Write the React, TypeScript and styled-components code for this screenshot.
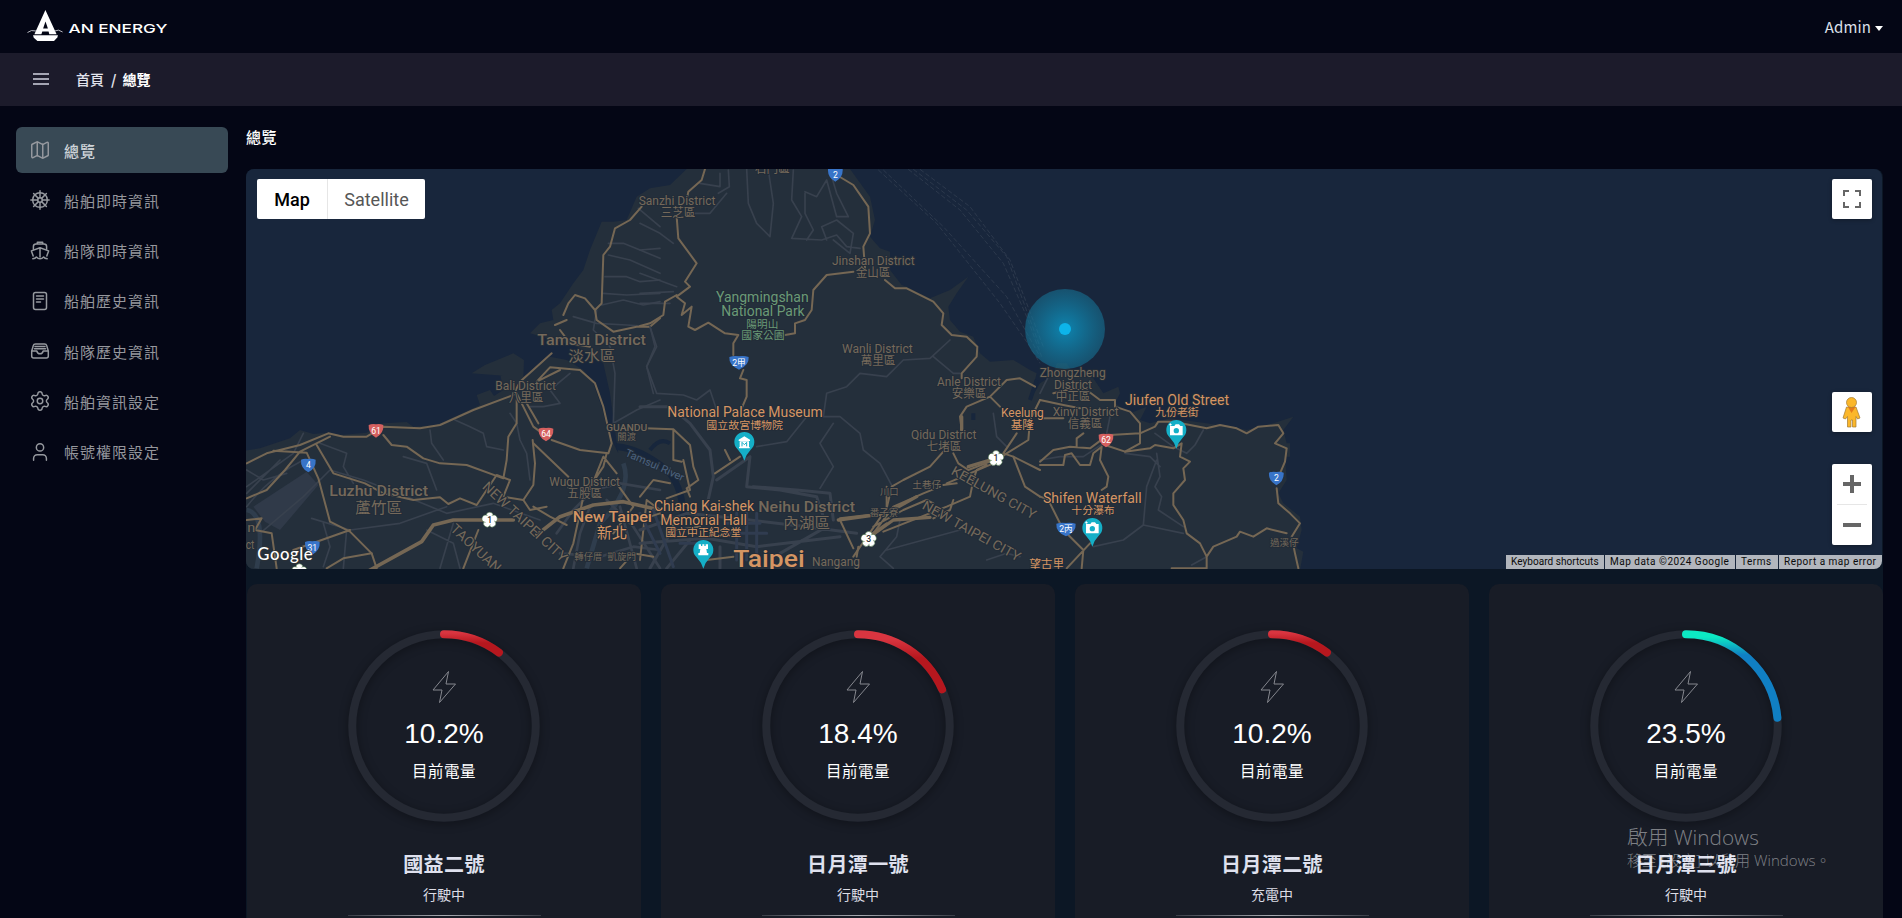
import React from "react";
import styled, { createGlobalStyle } from "styled-components";
import { Map as MapIcon, ShipWheel, Settings, User } from "lucide-react";

const GlobalStyle = createGlobalStyle`
  * { box-sizing: border-box; }
  html, body { margin: 0; height: 100%; overflow: hidden; background: #040615; }
  body { font-family: "Noto Sans CJK TC", "Noto Sans", sans-serif; color: #fff; }
`;

const Page = styled.div`
  position: relative;
  height: 918px;
  overflow: hidden;
  display: flex;
  flex-direction: column;
  background: #040615;
`;

const TopBar = styled.header`
  flex: none;
  height: 53px;
  display: flex;
  justify-content: space-between;
  align-items: center;
  padding: 0 19px 0 27px;
  background: #040615;
`;

const AdminMenu = styled.div`
  display: flex;
  align-items: center;
  gap: 4px;
  font-size: 15px;
  letter-spacing: 0.15px;
  color: #dde0ea;
`;

const Caret = styled.span`
  margin-top: 3px;
  border: 4.5px solid transparent;
  border-top: 5px solid #fff;
  border-bottom: 0;
`;

const CrumbBar = styled.nav`
  flex: none;
  height: 53px;
  display: flex;
  align-items: center;
  padding: 0 0 2px 33px;
  background: #1c1b2b;
  font-size: 14px;
  font-weight: 500;
  color: #e2e3ec;
`;

const Burger = styled.div`
  width: 16px;
  height: 12px;
  margin-right: 27px;
  border-top: 2px solid #a4a5b3;
  border-bottom: 2px solid #a4a5b3;
  display: flex;
  align-items: center;
  &::after { content: ""; width: 100%; height: 2px; background: #a4a5b3; }
`;

const Slash = styled.span`margin: 0 6px 0 7px; font-weight: 700;`;
const Current = styled.span`font-weight: 700; color: #fff;`;

const Body = styled.div`
  flex: 1;
  min-height: 0;
  display: flex;
`;

const Sidebar = styled.aside`
  flex: none;
  width: 246px;
  padding: 21px 18px 0 16px;
  display: flex;
  flex-direction: column;
  gap: 4.3px;
`;

const NavItem = styled.a<{ $active?: boolean }>`
  height: 46px;
  padding: 0 0 0 13px;
  display: flex;
  align-items: center;
  gap: 13px;
  border-radius: 6px;
  font-size: 15px;
  letter-spacing: 1px;
  font-weight: ${p => (p.$active ? 500 : 400)};
  color: ${p => (p.$active ? "#cdd3d8" : "#96979d")};
  background: ${p => (p.$active ? "#384955" : "transparent")};
  svg { flex: none; color: #96999f; }
`;

const Main = styled.main`
  width: 1637px;
  display: flex;
  flex-direction: column;
`;

const Title = styled.h1`
  flex: none;
  margin: 0;
  height: 63px;
  padding-top: 19px;
  font-size: 15px;
  line-height: 24px;
  font-weight: 500;
  letter-spacing: 0.5px;
`;

const Board = styled.div`
  flex: none;
  height: 749px;
  background: #0c1725;
  border-radius: 8px 8px 0 0;
`;

const MapFrame = styled.section`
  position: relative;
  height: 400px;
  margin-right: 1px;
  border-radius: 8px;
  overflow: hidden;
  background: #18263c;
  font-family: Roboto, "Noto Sans CJK TC", sans-serif;
  & > svg { display: block; }
`;

const TypeSwitch = styled.div`
  position: absolute;
  left: 11px;
  top: 10px;
  height: 40px;
  display: flex;
  border-radius: 2px;
  background: #fff;
`;

const TypeButton = styled.div<{ $on?: boolean }>`
  width: ${p => (p.$on ? 70 : 98)}px;
  display: flex;
  align-items: center;
  justify-content: center;
  font-size: 18px;
  font-weight: ${p => (p.$on ? 500 : 400)};
  color: ${p => (p.$on ? "#000" : "#565656")};
  border-left: ${p => (p.$on ? 0 : 1)}px solid #e6e6e6;
`;

const MapButton = styled.div<{ $top: number; $tall?: boolean }>`
  position: absolute;
  right: 10px;
  top: ${p => p.$top}px;
  width: 40px;
  height: ${p => (p.$tall ? 81 : 40)}px;
  border-radius: 2px;
  background: #fff;
  box-shadow: 0 1px 4px rgba(0, 0, 0, 0.3);
  svg { display: block; }
`;

const Credits = styled.div`
  position: absolute;
  right: 0;
  bottom: 0;
  height: 14px;
  display: flex;
  gap: 1px;
`;

const Credit = styled.span<{ $w: number; $ls: number }>`
  width: ${p => p.$w}px;
  padding-left: 5px;
  white-space: nowrap;
  font-size: 10px;
  line-height: 14px;
  letter-spacing: ${p => p.$ls}px;
  color: #0a0a0a;
  background: #b2b6bd;
`;

const Cards = styled.section`
  margin: 15px 0 0 1px;
  display: grid;
  grid-template-columns: repeat(4, 394px);
  justify-content: space-between;
`;

const Card = styled.article`
  height: 420px;
  padding-top: 46px;
  display: flex;
  flex-direction: column;
  align-items: center;
  border-radius: 10px;
  background: #181c26;
`;

const Gauge = styled.div`
  width: 192px;
  height: 192px;
  display: grid;
  & > * { grid-area: 1 / 1; }
  & > svg { overflow: visible; filter: drop-shadow(0 2px 5px rgba(0, 0, 0, 0.35)); }
`;

const GaugeText = styled.div`
  z-index: 1;
  padding-top: 40px;
  display: flex;
  flex-direction: column;
  align-items: center;
`;

const Percent = styled.div`
  margin-top: 14px;
  font: 28px/32px "Liberation Sans", Arial, sans-serif;
`;

const Caption = styled.div`
  margin-top: 8px;
  font-size: 15.5px;
  line-height: 24px;
  letter-spacing: 0.5px;
`;

const ShipName = styled.h2`
  margin: 27px 0 0;
  font-size: 20px;
  line-height: 30px;
  font-weight: 700;
  letter-spacing: 0.4px;
  color: #dfe1ee;
`;

const ShipState = styled.div`
  margin-top: 5px;
  font-size: 14px;
  line-height: 20px;
  color: #dcdde5;
`;

const Divider = styled.div`
  margin-top: 11px;
  width: 193px;
  height: 1px;
  background: linear-gradient(90deg, #3a3e47, #a8aab0 50%, #3a3e47);
`;

const Watermark = styled.div`
  position: absolute;
  left: 1627px;
  top: 823px;
  font-family: "Open Sans", "Noto Sans CJK TC", sans-serif;
  font-weight: 300;
  color: rgba(255, 255, 255, 0.45);
  white-space: nowrap;
`;
const WaterTitle = styled.div`font-size: 20.8px; line-height: 28px;`;
const WaterText = styled.div`font-size: 15.1px; line-height: 18px;`;

const Logo = () => (
  <svg width="145" height="40" viewBox="27 7 145 40">
    <path d="M45.4 10 56.6 34.3H49.3L48.6 31.4H42.3L41.4 34.3H34.4ZM45.5 21.5 43.1 28.4H47.9Z" fill="#fff" fillRule="evenodd" />
    <path d="M33 35.3H58L57.3 37.5 54 41H37.4L33.8 37.8Z" fill="#fff" />
    <path d="M27.5 32.5Q31 29.4 36.2 31M62.6 32Q58.5 28.8 54.6 31" fill="none" stroke="#c8c9d0" strokeWidth="0.9" />
    <text x="68.5" y="33" textLength="99" lengthAdjust="spacingAndGlyphs" fontFamily="Inter, sans-serif" fontSize="12" fontWeight="500" fill="#fff">AN ENERGY</text>
  </svg>
);

const line = { fill: "none", stroke: "currentColor", strokeWidth: 1.5, strokeLinecap: "round" as const, strokeLinejoin: "round" as const };

const FleetIcon = () => (
  <svg width="22" height="22" viewBox="0 0 22 22" {...line}>
    <path d="M8.3 3.8V2.3h5.4v1.5M4.4 9.300V6.400Q4.400 4 7 4h8Q17.600 4 17.600 6.400V9.300" />
    <path d="M4.200 16 2.400 10.900 11 7.800 19.600 10.900 17.800 16M11 8v9" />
    <path d="M3.800 18.800Q6.200 18.600 7.400 17 9 18.800 11 18.800T14.600 17Q15.800 18.600 18.200 18.800" />
  </svg>
);
const RecordIcon = () => (
  <svg width="22" height="22" viewBox="0 0 22 22" {...line}>
    <rect x="4.500" y="2.500" width="13" height="17" rx="2" /><path d="M7.500 6h7M7.500 9h7M7.500 12h4" />
  </svg>
);
const ArchiveIcon = () => (
  <svg width="22" height="22" viewBox="0 0 22 22" {...line}>
    <path d="M2.700 11 4.300 5.600Q4.700 4 6.500 4h9q1.800 0 2.200 1.600L19.300 11v5q0 2-2 2H4.700q-2 0-2-2ZM2.700 11H7.800Q8.500 13.800 11 13.800T14.200 11h5.100M6 6.500h10M5.500 8.800h11" />
  </svg>
);

const lucide = { size: 22, strokeWidth: 1.6 };
const nav = [
  { text: "總覽", icon: <MapIcon {...lucide} />, active: true },
  { text: "船舶即時資訊", icon: <ShipWheel {...lucide} /> },
  { text: "船隊即時資訊", icon: <FleetIcon /> },
  { text: "船舶歷史資訊", icon: <RecordIcon /> },
  { text: "船隊歷史資訊", icon: <ArchiveIcon /> },
  { text: "船舶資訊設定", icon: <Settings {...lucide} /> },
  { text: "帳號權限設定", icon: <User {...lucide} /> },
];

type LabelProps = { x: number; y: number; w: number; s?: number; c?: string; children: string; r?: number; b?: boolean };
const DIM = "#75695a";
const TAN = "#d59563";

const Label = ({ x, y, w, s = 36, c = DIM, children, r = 0, b }: LabelProps) => (
  <text x={x} y={y} textAnchor="middle" fontSize={s} fill={c} textLength={w} lengthAdjust="spacingAndGlyphs"
    fontWeight={b ? 500 : 400} stroke="#222c38" strokeWidth={6} paintOrder="stroke" strokeLinejoin="round"
    transform={r ? `rotate(${r} ${x} ${y})` : undefined}>{children}</text>
);

const Shield = ({ x, y, t, red, w = 22 }: { x: number; y: number; t: string; red?: boolean; w?: number }) => (
  <g transform={`translate(${x} ${y})`}>
    <path d={`M${-w} -17Q${-w / 2} -22 0 -19Q${w / 2} -22 ${w} -17Q${w + 2} 8 0 21Q${-w - 2} 8 ${-w} -17Z`} fill={red ? "#d5605f" : "#3874c8"} />
    <text y={9} textAnchor="middle" fontSize={26} fill="#fff">{t}</text>
  </g>
);

const Flower = ({ x, y, t }: { x: number; y: number; t: string }) => (
  <g transform={`translate(${x} ${y})`}>
    <g fill="#fff" stroke="#4f7a4a" strokeWidth={1.5}>
      {[0, 72, 144, 216, 288].map(a => <circle key={a} cx={0} cy={-13} r={10.5} transform={`rotate(${a})`} />)}
    </g>
    <circle r={14} fill="#fff" />
    <text y={9} textAnchor="middle" fontSize={26} fontWeight={500} fill="#333">{t}</text>
  </g>
);

const Pin = ({ x, y, kind }: { x: number; y: number; kind: "camera" | "museum" | "tower" }) => (
  <g transform={`translate(${x} ${y})`}>
    <path d="M0 55Q-6 35-19 22A30 30 0 1 1 19 22Q6 35 0 55Z" fill="#15afc7" />
    {kind === "camera" && <><path d="M-19-13h13l4-5H8l4 5h7v28h-38Z" fill="#fff" /><circle cy={1} r={8} fill="#15afc7" /><path d="M-18-14v-7M-21-17h7" stroke="#fff" strokeWidth={3} /></>}
    {kind === "museum" && <><path d="M-17-8 0-18 17-8v4h-34ZM-16 14h32v4h-32ZM-14-3h28v17h-28Z" fill="#fff" /><path d="M-7 12V0L0 7 7 0V12" fill="none" stroke="#15afc7" strokeWidth={3} /></>}
    {kind === "tower" && <path d="M-14-18h7v5h4v-5h6v5h4v-5h7V-4H9L11 8h4v7h-30V8h4L-9-4h-5Z" fill="#fff" />}
  </g>
);

const WestRoads = () => (
  <>
    <g stroke="#38414e" strokeWidth={5}>
      <path d="M20 1040Q90 950 190 900M190 820 160 880 20 980M20 1000 120 900M240 850 320 880 310 920 340 970M20 930 70 960 140 940M60 1120 190 1010 270 930 370 960 500 1010 620 1060 760 1030 900 1080M215 1075 330 1110 480 1090 620 1040M250 1090 270 1160 250 1220M320 1110 310 1225M640 1090 600 1225M560 1110 640 1150 660 1225" />
      <path d="M1195 145 1260 200M1105 250 1150 250 1200 270 1260 265M1105 285 1170 300 1260 340M1095 350 1160 350 1200 365 1260 360M1090 400 1160 405 1260 400M1085 435 1150 420 1210 435 1260 425M1000 470 1070 490 1160 495 1230 500 1245 560 1220 620 1240 700M1070 450 1060 510 1110 560 1125 640 1120 790 1190 750 1260 720M645 780 690 800 730 820 740 860 790 870M570 810 575 850 610 900M490 890 560 910 590 990M870 740 910 740 960 730 930 690 990 640M810 760 830 790 840 840 860 880 870 960" />
      <path d="M950 1120 1000 1050 1060 990 1140 970 1260 990M960 1180 1080 1190 1180 1160 1260 1170M1000 1225 1020 1120 1050 1040M1100 1020 1180 1100 1260 1225M1140 1040 1190 1225" strokeWidth={8} />
    </g>
    <g stroke="#756754" strokeWidth={6}>
      <path d="M20 910 80 880 180 855 265 820 310 830 380 830 430 800 540 805 600 795 700 750 820 705 840 665 935 580M20 1015 80 990 135 930 180 875 270 830M100 872 200 878 235 955 270 1085 330 1115 395 1180 410 1225M230 855 280 940 375 970 430 1000 520 1020 600 1012 625 1032 660 1015 710 1035 770 945 810 960 790 1010 850 1020 880 975 885 910 878 840" />
      <path d="M430 825 455 855 500 860 550 895 600 910 680 915 790 955 800 900 805 830 830 790 830 720M830 700 880 800 900 815M935 840 1020 870 1105 880 1115 850 1090 740 1065 670 1020 630 930 622 890 665 960 630M860 730 895 790M880 850 985 950M880 1040 930 1070 980 1095M20 1080 65 1075 45 1110 95 1120 110 1225M160 1170 330 1110M260 1225 310 1195 395 1180M670 1225 715 1110M1100 880 1090 920 1030 1010 1000 1150 970 1225M1130 940 1090 890 1050 990" />
      <path d="M1205 140 1170 180 1125 205 1110 260 1090 285 1085 430 1065 450 1035 415 1005 405 985 430 970 465M1065 450 1070 480 1120 515 1190 500 1230 500 1260 475M945 495 980 480M960 510 990 550 1050 560M850 1020 870 1050 920 1040M1200 1200 1220 1020 1260 1050M1130 970 1180 1040 1120 1120M1140 1225 1180 1180 1240 1190" />
    </g>
    <g stroke="#756754" strokeWidth={11}>
      <path d="M390 1230 545 1145 580 1095 640 1080 820 1080M890 1125 960 1070 1060 1035 1150 1025 1260 1050" />
    </g>
  </>
);

const MidRoads = () => (
  <>
    <g stroke="#38414e" strokeWidth={5}>
      <path d="M320 27 325 130 350 190 390 230 400 130 385 30M180 70 240 80 240 40M260 100 210 160 165 160M265 30 268 80 235 100M460 30 455 120 485 170 455 235 545 240 590 225 620 260 660 265M495 100 495 160 520 210 500 240M495 95 530 110 560 60 590 170 625 170 590 100 575 50M560 240 545 200 590 180 640 220 630 280 580 240M0 190 60 220 100 250M0 270 60 295M0 340 110 380M0 400 100 395M0 430 90 430" />
      <path d="M30 500 50 560 20 620 50 700 130 705 170 720 210 690 230 750M790 600 870 595 930 540M880 590 940 640 960 640M790 600 740 650 660 640 620 680 560 700 550 770 600 770 660 820 670 870 720 910 760 985M580 790 540 850 580 920 540 985M350 860 440 845 500 770M1060 760 1070 830 1100 860M780 1080 770 1130 720 1190 760 1225M740 1170 850 1140 960 1110M1040 1200 1100 1180 1140 1190" />
      <path d="M0 740 90 740 150 790 210 870 220 950 200 1040M230 960 330 890 320 980 420 990 530 1010 560 1100 420 1180M340 980 470 990 570 1000 580 1080M0 1110 140 1060 330 1080 500 1100 650 1120M0 1150 200 1135 350 1160 600 1130M30 1225 90 1120M80 1225 150 1140M240 1225 240 1160" strokeWidth={9} />
    </g>
    <path d="M260 1090h100M270 1120h110M290 1060v140M320 1060v140M350 1060v140M0 1060 60 1180M40 1050 100 1220M120 1150 210 1150" stroke="#303c50" strokeWidth={9} fill="none" />
    <g stroke="#756754" strokeWidth={6}>
      <path d="M195 27 185 60 145 95 140 120M110 170 115 235 170 310 135 365 150 380 110 410 135 430 125 465 155 440 145 500 165 510 205 488 255 520 295 525 280 550 280 585M310 630 300 655 320 660 320 710 305 745M0 498 30 490 70 465 75 425 110 405M15 805 100 808 150 855 160 920 175 960 140 985 150 1010M100 808 100 900 125 905M80 1015 150 990 130 900M270 900 255 870M300 890 225 940M0 1010 40 960 90 970M0 1080 60 1060 110 1110 180 1100M200 1200 280 1190M600 1075 730 1060M600 1080 640 1165M650 1190 655 1160M690 1125 740 1090M740 1045 740 980" />
      <path d="M590 45 640 75 685 140 690 220 670 260 675 325M640 335 560 345 520 390 515 450 495 480 465 490 465 520 435 525M735 360 765 385 800 385 880 425 910 460 905 495 935 525 980 530 1012 560 1010 590 965 640 965 655M965 810 960 770 980 740 1050 710 1100 660 1140 655 1185 680M1050 710 1080 740M1200 720 1170 780 1165 840 1100 880 1075 900M1200 930 1120 890 1090 880 1130 820" />
      <path d="M910 875 870 920 790 960 755 980 740 1045 640 1190M940 880 955 910 985 930 1050 905M910 975 950 970M700 1120 760 1040 850 1000 900 980M700 1100 790 1050 860 1020 880 1030M1040 915 1010 930 1000 960 990 1010 920 1040 730 1115M920 970 990 940 1060 910M880 1075 930 1050 940 1020M1120 890 1155 980 1200 1010" />
    </g>
    <path d="M595 1080 740 1060 830 1010M690 1130 760 1080 870 1072M985 920 1050 900M965 810 965 770" stroke="#756754" strokeWidth={10} />
  </>
);

const EastRoads = () => (
  <>
    <g stroke="#38414e" strokeWidth={5}>
      <path d="M345 820 400 860 440 880 465 855 490 810M350 880 360 950 345 980 365 1010 355 1050 430 1100M255 880 330 890 360 920M350 900 320 980 310 1095 430 1120M310 1095 250 1140 160 1160M455 1215 500 1190M0 900 60 890 130 890 190 850M200 820 210 770M0 700 30 640" />
    </g>
    <g stroke="#756754" strokeWidth={6}>
      <path d="M0 720 70 735 120 745M40 700 80 690 140 690 180 720 225 720 225 740 270 755 300 790 300 850 255 875 195 855M0 905 40 870 90 860 150 865 190 835M130 820 110 835 110 860M210 825 300 820 345 800 355 785 400 785 500 805 540 795 590 805 620 820 655 800 715 795 730 820 705 850 740 865 735 905 720 940M710 985 715 1030 750 1060 780 1090 755 1130 765 1180 775 1225" />
      <path d="M0 915 70 915 75 885 95 880 120 915 150 915 160 880 185 860 180 900 205 950 200 980 185 990M255 875 330 865 345 855 400 865 425 850 420 890 450 905 430 925 435 960 400 1000 400 1035 430 1080 440 1120 480 1150 500 1190 500 1225 395 1225M500 1190 520 1160 590 1130 600 1115 640 1130 680 1105 740 1120M30 1030 70 1110 130 1170 125 1225M150 1150 80 1225M0 1010 30 1020M0 775 70 775" />
    </g>
  </>
);

const TaipeiMap = () => (
  <svg width="1636" height="400" viewBox="18 27 4908 1200">
    <defs>
      <radialGradient id="pulse"><stop offset="0" stopColor="#0b9ccc" stopOpacity="0.8" /><stop offset="1" stopColor="#166f91" stopOpacity="0.6" /></radialGradient>
    </defs>
    <path fill="#242f3b" d="M15 872 60 865 150 835 180 810 220 822 260 818 300 825 380 818 430 790 500 786 520 800 590 795 720 735 710 705 750 690 762 708 790 690 780 640 830 650 695 640 735 615 820 580 852 600 850 650 930 590 980 600 1030 630 1060 670 1085 740 1100 800 1120 850 1135 880 1122 790 1110 700 1090 610 1010 560 960 545 870 520 900 490 940 480 935 450 960 430 1000 370 1030 330 1050 270 1085 185 1120 185 1160 180 1190 110 1230 85 1290 75 1340 27 1830 27 1890 110 1905 180 1890 230 1920 265 1950 275 1950 330 1985 375 2000 380 2070 415 2130 390 2185 350 2150 400 2125 440 2130 480 2160 515 2200 530 2220 580 2250 605 2320 600 2370 630 2390 640 2370 720 2400 670 2440 645 2450 610 2480 610 2500 640 2560 655 2590 700 2635 680 2640 700 2625 730 2670 760 2720 740 2700 780 2730 790 2790 775 2900 790 3020 810 3100 790 3160 770 3130 810 3140 850 3150 850 3150 890 3135 890 3140 960 3115 1000 3130 1030 3180 1070 3185 1110 3170 1165 3190 1175 3180 1230 15 1230Z" />
    <path fill="#303a49" d="M40 1040 200 935 235 975 120 1110 75 1085Z" />
    <g fill="none" stroke="#17263c" strokeWidth={20}>
      <path d="M1130 860Q1200 865 1280 930Q1330 980 1330 1080" />
      <path d="M1230 870Q1260 830 1290 850M2370 720 2390 660M2200 780 2200 760" strokeWidth={12} />
      <path d="M20 1050Q80 1060 50 1225M1150 910Q1180 990 1080 1090L1040 1225" strokeWidth={14} stroke="#2f3d4d" />
    </g>
    <g fill="none" stroke="#364354" strokeWidth={2} strokeDasharray="14 7">
      <path d="M1915 30 2090 190 2280 430 2370 560 2400 610M1930 30 2110 200 2300 410 2400 590M2005 28 2160 150 2290 310 2360 470 2405 590M2020 28 2180 150 2300 290 2400 560M2040 28 2190 140 2310 300 2410 560" />
    </g>
    <g fill="none" strokeLinejoin="round" strokeLinecap="round">
      <WestRoads />
      <g transform="translate(1200 0)"><MidRoads /></g>
      <g transform="translate(2400 0)"><EastRoads /></g>
    </g>

    <Label x={1055} y={556} w={326} s={46} b>Tamsui District</Label>
    <Label x={1056} y={604} w={142} s={46}>淡水區</Label>
    <Label x={857} y={690} w={182}>Bali District</Label>
    <Label x={858} y={727} w={104}>八里區</Label>
    <Label x={1160} y={812} w={124} s={25} b>GUANDU</Label>
    <Label x={1160} y={840} w={56} s={28}>關渡</Label>
    <Label x={416} y={1009} w={296} s={46} b>Luzhu District</Label>
    <Label x={416} y={1058} w={140} s={46}>蘆竹區</Label>
    <Label x={1034} y={978} w={212}>Wugu District</Label>
    <Label x={1034} y={1015} w={104}>五股區</Label>
    <Label x={1117} y={1087} w={238} s={44} c={TAN} b>New Taipei</Label>
    <Label x={1116} y={1135} w={92} s={46} c={TAN}>新北</Label>
    <Label x={1045} y={1200} w={84} s={27}>轉仔厝</Label>
    <Label x={1145} y={1200} w={86} s={27}>凱旋門</Label>
    <Label x={845} y={1096} w={330} s={42} r={43}>NEW TAIPEI CITY</Label>
    <Label x={698} y={1175} w={190} s={42} r={43}>TAOYUAN</Label>
    <Label x={34} y={1117} w={24} s={40}>n</Label>
    <Label x={30} y={1166} w={26} s={40}>ct</Label>
    <Label x={1311} y={135} w={230}>Sanzhi District</Label>
    <Label x={1314} y={172} w={104}>三芝區</Label>
    <Label x={1597} y={40} w={104}>石門區</Label>
    <Label x={1900} y={315} w={248}>Jinshan District</Label>
    <Label x={1899} y={352} w={104}>金山區</Label>
    <Label x={1567} y={425} w={278} s={42} c="#6b9a76">Yangmingshan</Label>
    <Label x={1569} y={467} w={250} s={42} c="#6b9a76">National Park</Label>
    <Label x={1567} y={503} w={96} s={32} c="#6b9a76">陽明山</Label>
    <Label x={1569} y={537} w={130} s={32} c="#6b9a76">國家公園</Label>
    <Label x={1912} y={579} w={212}>Wanli District</Label>
    <Label x={1914} y={616} w={104}>萬里區</Label>
    <Label x={2187} y={678} w={192}>Anle District</Label>
    <Label x={2187} y={715} w={104}>安樂區</Label>
    <Label x={1515} y={770} w={466} s={42} c={TAN}>National Palace Museum</Label>
    <Label x={1514} y={807} w={230} s={32} c={TAN}>國立故宮博物院</Label>
    <Label x={2347} y={772} w={128} s={38} c={TAN}>Keelung</Label>
    <Label x={2347} y={808} w={70} s={34} c={TAN}>基隆</Label>
    <Label x={2111} y={837} w={196}>Qidu District</Label>
    <Label x={2112} y={874} w={104}>七堵區</Label>
    <Label x={1948} y={1005} w={56} s={27}>川口</Label>
    <Label x={2060} y={984} w={86} s={28}>土巷仔</Label>
    <Label x={1932} y={1068} w={86} s={28}>番子寮</Label>
    <Label x={1392} y={1054} w={300} s={42} c={TAN}>Chiang Kai-shek</Label>
    <Label x={1391} y={1096} w={260} s={42} c={TAN}>Memorial Hall</Label>
    <Label x={1390} y={1128} w={228} s={32} c={TAN}>國立中正紀念堂</Label>
    <Label x={1700} y={1055} w={290} s={46} b>Neihu District</Label>
    <Label x={1700} y={1103} w={140} s={46}>內湖區</Label>
    <Label x={1587} y={1222} w={214} s={72} c={TAN} b>Taipei</Label>
    <Label x={1788} y={1219} w={144}>Nangang</Label>
    <Label x={1240} y={925} w={190} s={32} r={24} c="#4c6380">Tamsui River</Label>
    <Label x={2255} y={1010} w={284} s={40} r={29}>KEELUNG CITY</Label>
    <Label x={2188} y={1125} w={330} s={40} r={29}>NEW TAIPEI CITY</Label>
    <Label x={2498} y={651} w={198}>Zhongzheng</Label>
    <Label x={2499} y={688} w={114}>District</Label>
    <Label x={2499} y={724} w={104}>中正區</Label>
    <Label x={2537} y={769} w={198}>Xinyi District</Label>
    <Label x={2535} y={805} w={104}>信義區</Label>
    <Label x={2811} y={735} w={312} s={42} c={TAN}>Jiufen Old Street</Label>
    <Label x={2811} y={767} w={130} s={32} c={TAN}>九份老街</Label>
    <Label x={2557} y={1029} w={296} s={42} c={TAN}>Shifen Waterfall</Label>
    <Label x={2559} y={1061} w={130} s={32} c={TAN}>十分瀑布</Label>
    <Label x={3133} y={1159} w={86} s={28}>過溪仔</Label>
    <Label x={2420} y={1228} w={105} s={36} c={TAN}>望古里</Label>

    <Shield x={408} y={812} t="61" red />
    <Shield x={205} y={916} t="4" />
    <Shield x={217} y={1163} t="31" />
    <Shield x={918} y={823} t="64" red />
    <Shield x={1786} y={44} t="2" />
    <Shield x={1497} y={608} t="2甲" w={29} />
    <Shield x={2598} y={841} t="62" red />
    <Shield x={3109} y={955} t="2" />
    <Shield x={2478} y={1108} t="2丙" w={29} />
    <Flower x={749} y={1080} t="1" />
    <Flower x={2268} y={895} t="1" />
    <Flower x={1886} y={1138} t="3" />
    <Flower x={178} y={1235} t="" />
    <Pin x={1513} y={847} kind="museum" />
    <Pin x={1390} y={1171} kind="tower" />
    <Pin x={2809} y={811} kind="camera" />
    <Pin x={2557} y={1105} kind="camera" />
    <circle cx={2475} cy={507} r={120} fill="url(#pulse)" />
    <circle cx={2475} cy={507} r={18} fill="#0db4ea" />
    <text x={52} y={1201} fontSize={50} fontWeight={500} textLength={166} fill="#fff" fontFamily="Lato, sans-serif" stroke="#333" strokeWidth={4} paintOrder="stroke">Google</text>
  </svg>
);

const ships = [
  { id: "s1", name: "國益二號", state: "行駛中", pct: 10.2, fade: [3, 13] },
  { id: "s2", name: "日月潭一號", state: "行駛中", pct: 18.4, fade: [9, 28] },
  { id: "s3", name: "日月潭二號", state: "充電中", pct: 10.2, fade: [3, 13] },
  { id: "s4", name: "日月潭三號", state: "行駛中", pct: 23.5, fade: [7, 25] },
];
const R = 91.75;
const LENGTH = 2 * Math.PI * R;

/* The arc is drawn from 3 o'clock and turned a quarter back, so its x axis points up on screen. */
const ShipCard = ({ id, name, state, pct, fade }: (typeof ships)[number]) => {
  const [from, to] = pct > 20 ? ["#0ce9c3", "#107fc3"] : ["#d93540", "#b6171e"];
  return (
    <Card>
      <Gauge>
        <svg width="192" height="192" viewBox="0 0 192 192">
          <defs>
            <linearGradient id={id} gradientUnits="userSpaceOnUse" x1={192 - fade[0]} y1="96" x2={192 - fade[1]} y2="96">
              <stop offset="0" stopColor={from} /><stop offset="1" stopColor={to} />
            </linearGradient>
          </defs>
          <circle cx="96" cy="96" r={R} fill="none" stroke="#252933" strokeWidth="8" />
          <circle cx="96" cy="96" r={R} fill="none" stroke={`url(#${id})`} strokeWidth="8" strokeLinecap="round"
            strokeDasharray={`${(LENGTH * pct) / 100} ${LENGTH}`} transform="rotate(-90 96 96)" />
        </svg>
        <GaugeText>
          <svg width="26" height="34" viewBox="0 0 26 34" fill="none" stroke="#85878e" strokeWidth="1" strokeLinejoin="round">
            <path d="M17.5 1.5 15 14H24.5L8.5 32.500 11 20H2Z" />
          </svg>
          <Percent>{pct.toFixed(1)}%</Percent>
          <Caption>目前電量</Caption>
        </GaugeText>
      </Gauge>
      <ShipName>{name}</ShipName>
      <ShipState>{state}</ShipState>
      <Divider />
    </Card>
  );
};

export default function App() {
  return (
    <Page>
      <GlobalStyle />
      <TopBar>
        <Logo />
        <AdminMenu>Admin<Caret /></AdminMenu>
      </TopBar>
      <CrumbBar>
        <Burger />
        <span>首頁</span><Slash>/</Slash><Current>總覽</Current>
      </CrumbBar>
      <Body>
        <Sidebar>
          {nav.map(n => <NavItem key={n.text} $active={n.active}>{n.icon}{n.text}</NavItem>)}
        </Sidebar>
        <Main>
          <Title>總覽</Title>
          <Board>
            <MapFrame>
              <TaipeiMap />
              <TypeSwitch><TypeButton $on>Map</TypeButton><TypeButton>Satellite</TypeButton></TypeSwitch>
              <MapButton $top={10}>
                <svg width="40" height="40" fill="none" stroke="#666" strokeWidth="2"><path d="M12 17v-5h5M23 12h5v5M28 23v5h-5M17 28h-5v-5" /></svg>
              </MapButton>
              <MapButton $top={223}>
                <svg width="40" height="40" fill="#fbb72a" stroke="#a07a33" strokeWidth="0.7"><path d="M14.5 15h9.500l4 11-2.500 1-1.500-2.500V35h-3.500v-7h-1.500v7h-3.500V24.500L13.500 27 11 26Z" /><path d="m16 15 3.500 6 4-6Z" fill="#e57b1a" stroke="none" /><circle cx="19.500" cy="10.500" r="5" /></svg>
              </MapButton>
              <MapButton $top={295} $tall>
                <svg width="40" height="81"><path d="M11 20h18M20 11v18M11 61h18" stroke="#666" strokeWidth="4" /><path d="M5 40.500h30" stroke="#e6e6e6" /></svg>
              </MapButton>
              <Credits>
                <Credit $w={98} $ls={0.05}>Keyboard shortcuts</Credit>
                <Credit $w={130} $ls={0.5}>Map data ©2024 Google</Credit>
                <Credit $w={42} $ls={0.5}>Terms</Credit>
                <Credit $w={103} $ls={0.5}>Report a map error</Credit>
              </Credits>
            </MapFrame>
            <Cards>{ships.map(s => <ShipCard key={s.id} {...s} />)}</Cards>
          </Board>
        </Main>
      </Body>
      <Watermark>
        <WaterTitle>啟用 Windows</WaterTitle>
        <WaterText>移至 [設定] 以啟用 Windows。</WaterText>
      </Watermark>
    </Page>
  );
}
